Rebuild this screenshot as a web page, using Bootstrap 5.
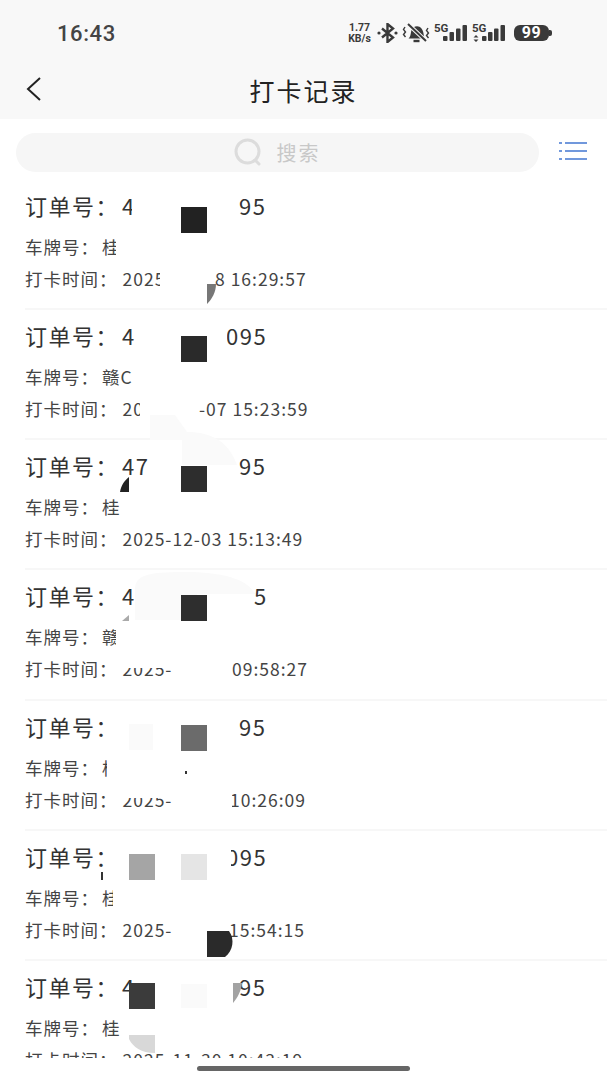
<!DOCTYPE html>
<html lang="zh-CN">
<head>
    <meta charset="UTF-8">
    <meta name="viewport" content="width=device-width, initial-scale=1.0">
    <title>打卡记录</title>
    <link href="https://cdn.jsdelivr.net/npm/bootstrap@5.3.0/dist/css/bootstrap.min.css" rel="stylesheet">
    <style>
        html, body { height: 1080px; overflow: hidden; }
        body {
            background: #fff;
            font-family: "Noto Sans CJK SC", "Noto Sans", sans-serif;
            color: #333;
        }
        .top-area { background: #f8f8f8; height: 119px; }
        .status-row { height: 66px; padding: 0 55px 0 57px; color: #3a3a3a; }
        .clock { font-family: Roboto, sans-serif; font-weight: 500; font-size: 22px; letter-spacing: .6px; color: #444; }
        .speed { font-family: Roboto, sans-serif; font-weight: 700; font-size: 10.5px; line-height: 11px; text-align: center; width: 27px; white-space: nowrap; }
        .sig-wrap { position: relative; }
        .sig-label { position: absolute; left: 0; top: 0; font-family: Roboto, sans-serif; font-weight: 700; font-size: 11.5px; line-height: 10px; }
        .batt { width: 35px; height: 16px; background: #3a3a3a; border-radius: 6px; color: #fff; font-family: Roboto, sans-serif; font-weight: 700; font-size: 16px; line-height: 16px; text-align: center; letter-spacing: .6px; position: relative; margin-left: 2px; margin-right: 3px; }
        .batt::after { content: ""; position: absolute; right: -3px; top: 5px; width: 3px; height: 6px; background: #3a3a3a; border-radius: 0 2px 2px 0; }
        .page-head { height: 53px; position: relative; }
        .back-btn { position: absolute; left: 25px; top: 9px; line-height: 0; }
        .page-title { font-size: 25px; letter-spacing: 2px; color: #222; line-height: 48px; margin: 0; font-weight: 400; }
        .search-row { height: 61px; padding: 14px 20px 8px 16px; }
        .search-pill { width: 523px; height: 39px; background: #f6f6f6; border-radius: 20px; gap: 14px; padding-right: 1px; }
        .search-word { font-size: 20px; letter-spacing: 2px; color: #c8c8c8; }
        .record-list { height: 878px; overflow: hidden; position: relative; }
        .record-row { height: 130.15px; margin-left: 25px; border-bottom: 2px solid #f7f7f7; padding-top: 9px; }
        .line-order { height: 33px; font-size: 22px; line-height: 33px; letter-spacing: 1.500px; color: #333; margin-bottom: 10px; white-space: nowrap; }
        .line-order .colon-mark { margin-right: 3px; }
        .line-plate, .line-time { height: 30px; font-size: 17.5px; line-height: 30px; letter-spacing: 1px; color: #444; white-space: nowrap; }
        .line-plate { margin-bottom: 2px; }
        .line-plate .colon-mark { margin-right: 3px; }
        .line-time .colon-mark { margin-right: 5px; }
        .colon-mark { font-family: "Noto Sans CJK TC", sans-serif; }
        .frag { display: inline-block; }
        .mosaic { position: absolute; left: 0; top: 0; }
        .home-bar { width: 213px; height: 5px; background: #666; border-radius: 3px; margin: 8px auto 0; }
    </style>
</head>
<body>
    <div class="top-area">
        <div class="status-row d-flex align-items-center justify-content-between">
            <span class="clock">16:43</span>
            <div class="d-flex align-items-center gap-1">
                <div class="speed">1.77<br>KB/s</div>
                <svg width="21" height="20" viewBox="0 0 21 20" fill="none" stroke="#3a3a3a" stroke-width="2.400"><path d="M5 5.500l11 9-5.500 4.500V1l5.500 4.500-11 9"/><circle cx="2" cy="10" r="1.600" fill="#3a3a3a" stroke="none"/><circle cx="19" cy="10" r="1.600" fill="#3a3a3a" stroke="none"/></svg>
                <svg width="28" height="20" viewBox="0 0 28 20" fill="none" stroke="#3a3a3a"><path d="M6.500 15.500c2.500-2 2-5 3-8.500s7-5.500 10-1.500 1.500 7.500 3.500 10z" fill="#3a3a3a" stroke="none"/><path d="M11.500 18h6" stroke-width="2.400"/><path d="M6 1l18 17" stroke="#f8f8f8" stroke-width="4"/><path d="M6 1l18 17" stroke-width="2"/><path d="M3 4l-1.500 2.500L3.500 9 1.500 11.500 3.500 14M26 5l-1.500 2.500 2 2.500-2 2.500 2 2.500" stroke-width="1.400"/></svg>
                <div class="sig-wrap"><span class="sig-label">5G</span><svg width="34" height="20" viewBox="0 0 34 20" fill="#3a3a3a" class="d-block"><rect x="9" y="13" width="4.500" height="5" rx="1"/><rect x="15.500" y="9" width="4.500" height="9" rx="1"/><rect x="22" y="5.500" width="4.500" height="12.500" rx="1"/><rect x="28.500" y="2" width="4.500" height="16" rx="1"/></svg></div>
                <div class="sig-wrap"><span class="sig-label">5G</span><svg width="36" height="20" viewBox="0 0 36 20" fill="#3a3a3a" class="d-block"><path d="M4 12l2.500 2.600h-5zM4 19l-2.500-2.600h5z"/><rect x="10" y="13" width="4.500" height="5" rx="1"/><rect x="16" y="9" width="4.500" height="9" rx="1"/><rect x="22" y="5.500" width="4.500" height="12.500" rx="1"/><rect x="28.500" y="2" width="4.500" height="16" rx="1"/></svg></div>
                <div class="batt">99</div>
            </div>
        </div>
        <div class="page-head d-flex justify-content-center">
            <a class="back-btn" href="#"><svg width="18" height="28" viewBox="0 0 18 28" fill="none" stroke="#222" stroke-width="2"><path d="M15 3L3 14l12 11"/></svg></a>
            <h1 class="page-title">打卡记录</h1>
        </div>
    </div>

    <div class="search-row d-flex align-items-start justify-content-between">
        <div class="search-pill d-flex align-items-center justify-content-center">
            <svg width="29" height="29" viewBox="0 0 29 29" fill="none" stroke="#dcdcdc" stroke-width="3"><circle cx="13.500" cy="13.500" r="11.500"/><path d="M21 22l4 4" stroke-linecap="round"/></svg>
            <span class="search-word">搜索</span>
        </div>
        <svg width="28" height="20" viewBox="0 0 28 20" fill="#7198dc" class="mt-2"><rect x="0" y="1" width="3" height="2"/><rect x="6" y="1" width="22" height="2"/><rect x="0" y="9" width="3" height="2"/><rect x="6" y="9" width="22" height="2"/><rect x="0" y="17" width="3" height="2"/><rect x="6" y="17" width="22" height="2"/></svg>
    </div>

    <div class="record-list" id="recordList"></div>
    <div class="home-bar"></div>

    <script>
        // x = page position of the part after the blanked-out middle
        const records = [
            { order: ['订单号：4', '95', 239], plate: '车牌号：桂', time: ['打卡时间：2025', '8 16:29:57', 215] },
            { order: ['订单号：4', '095', 226], plate: '车牌号：赣C', time: ['打卡时间：20', '-07 15:23:59', 199] },
            { order: ['订单号：47', '95', 239], plate: '车牌号：桂', time: ['打卡时间：2025-12-03 15:13:49', '', 0] },
            { order: ['订单号：4', '5', 254], plate: '车牌号：赣', time: ['打卡时间：2025-', '09:58:27', 232] },
            { order: ['订单号：', '95', 239], plate: '车牌号：桂', time: ['打卡时间：2025-', '10:26:09', 230] },
            { order: ['订单号：', '095', 226], plate: '车牌号：桂', time: ['打卡时间：2025-', '15:54:15', 229] },
            { order: ['订单号：4', '95', 239], plate: '车牌号：桂', time: ['打卡时间：2025-11-30 10:43:19', '', 0] }
        ];

        function label(text) {
            return text.replace('：', '<span class="colon-mark">：</span>');
        }

        function pair(part) {
            if (!part[1]) return label(part[0]);
            return `<span class="frag" style="width:${part[2] - 25}px">${label(part[0])}</span><span>${part[1]}</span>`;
        }

        let html = '';
        records.forEach(r => {
            html += `<div class="record-row">
                <div class="line-order">${pair(r.order)}</div>
                <div class="line-plate">${label(r.plate)}</div>
                <div class="line-time">${pair(r.time)}</div>
            </div>`;
        });
        // blanks and mosaic tiles lying over the list, list top is page y 180
        html += `<svg class="mosaic" width="607" height="878" viewBox="0 180 607 878">
            <g fill="#fff">
                <rect x="132" y="190" width="50" height="40"/><rect x="116" y="235" width="40" height="26"/><rect x="160" y="268" width="48" height="26"/>
                <rect x="140" y="398" width="58" height="26"/><rect x="132" y="365" width="40" height="26"/><rect x="218" y="326" width="9" height="26"/>
                <rect x="148" y="456" width="30" height="26"/>
                <rect x="116" y="625" width="40" height="26"/><rect x="120" y="655" width="60" height="13"/>
                <rect x="107" y="755" width="40" height="26"/><rect x="120" y="785" width="60" height="13"/><rect x="222" y="790" width="10" height="24"/>
                <rect x="113" y="885" width="40" height="26"/><rect x="222" y="846" width="9" height="26"/>
            </g>
            <g fill="#fafafa">
                <path d="M150 440v-25h25l12 17c25 0 42 10 50 33h-55v-25z"/>
                <path d="M135 620v-30c0-14 10-18 50-18 35 0 62 6 70 22h-58l-2 26z"/>
                <rect x="129" y="724" width="24" height="26"/>
            </g>
            <rect x="181" y="207" width="26" height="26" fill="#222"/>
            <path d="M207 284h9c0 8-4 15-9 20z" fill="#777"/>
            <rect x="181" y="336" width="26" height="26" fill="#2a2a2a"/>
            <rect x="181" y="466" width="26" height="26" fill="#2d2d2d"/>
            <path d="M120 492c1-7 5-12 9-15v15z" fill="#222"/>
            <rect x="181" y="595" width="26" height="26" fill="#2e2e2e"/>
            <path d="M122 621l7-6v6z" fill="#aaa"/>
            <rect x="181" y="725" width="26" height="26" fill="#6b6b6b"/>
            <rect x="185" y="771" width="2" height="3" fill="#333"/>
            <rect x="129" y="854" width="26" height="26" fill="#a5a5a5"/>
            <rect x="181" y="854" width="26" height="26" fill="#e5e5e5"/>
            <rect x="101" y="872" width="2" height="8" fill="#333"/>
            <path d="M207 931h22c6 8 4 20-4 26h-18z" fill="#2a2a2a"/>
            <rect x="129" y="983" width="26" height="26" fill="#3b3b3b"/>
            <rect x="181" y="984" width="26" height="24" fill="#fafafa"/>
            <path d="M233 983h9c-1 8-4 14-9 20z" fill="#a3a3a3"/>
            <path d="M129 1035h26v18c-14 0-22-6-26-14z" fill="#d8d8d8"/>
        </svg>`;
        document.getElementById('recordList').innerHTML = html;
    </script>
    <script src="https://cdn.jsdelivr.net/npm/bootstrap@5.3.0/dist/js/bootstrap.bundle.min.js"></script>
</body>
</html>
